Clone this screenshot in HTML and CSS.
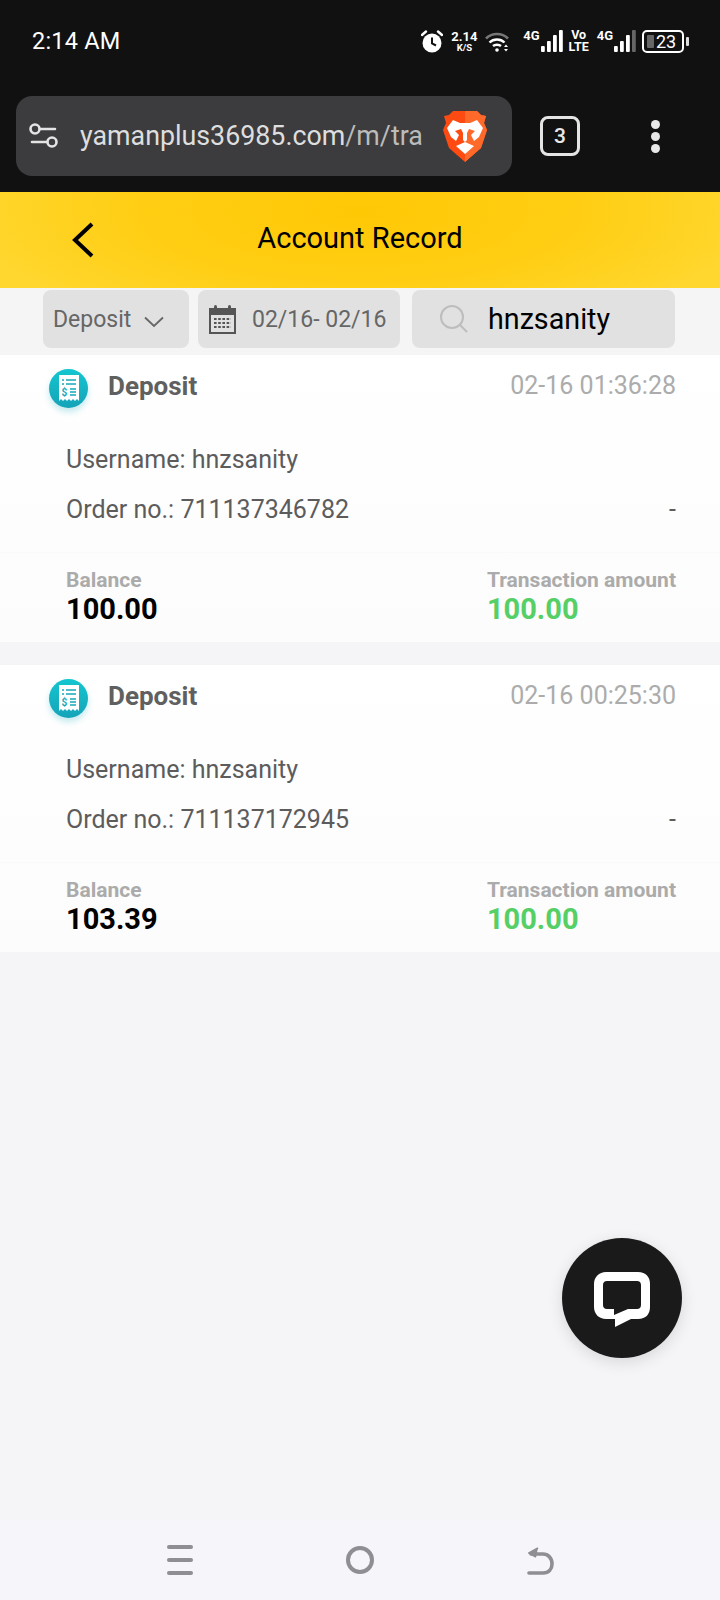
FILE: index.html
```html
<!DOCTYPE html>
<html lang="en">
<head>
    <meta charset="UTF-8">
    <meta name="viewport" content="width=device-width, initial-scale=1.0">
    <title>Account Record</title>
    <link rel="stylesheet" href="styles.css">
</head>
<body>
    <div class="browser">
        <div class="status-bar">
            <span class="clock">2:14 AM</span>
            <div class="status-icons">
                <svg class="alarm" width="22" height="23" viewBox="0 0 22 23">
                    <circle cx="11" cy="13" r="9.5" fill="#fff"/>
                    <path d="M11 7.5V13.5L15 15.5" fill="none" stroke="#111" stroke-width="2"/>
                    <path d="M1 5L5 1.5M21 5L17 1.5" stroke="#fff" stroke-width="2.4" stroke-linecap="round"/>
                </svg>
                <div class="speed"><span>2.14</span><small>K/S</small></div>
                <svg class="wifi" width="24" height="21" viewBox="0 0 24 21">
                    <path d="M1 7.5C7 1.5 17 1.5 23 7.5" fill="none" stroke="#777" stroke-width="2.6"/>
                    <path d="M4.5 11.5C8.5 7.5 15.5 7.5 19.5 11.5" fill="none" stroke="#fff" stroke-width="2.4"/>
                    <path d="M8 15C10 13.3 14 13.3 16 15" fill="none" stroke="#fff" stroke-width="2.4"/>
                    <circle cx="12" cy="19" r="1.8" fill="#fff"/>
                    <path d="M21 13.5L23 16H19ZM21 20.5L23 18H19Z" fill="#fff"/>
                </svg>
                <span class="net-label">4G</span>
                <svg class="bars" width="22" height="22" viewBox="0 0 22 22">
                    <rect x="0" y="16" width="3.8" height="6" rx="1" fill="#fff"/>
                    <rect x="6" y="11" width="3.8" height="11" rx="1" fill="#fff"/>
                    <rect x="12" y="5" width="3.8" height="17" rx="1" fill="#fff"/>
                    <rect x="18" y="0" width="3.8" height="22" rx="1" fill="#fff"/>
                </svg>
                <div class="volte"><span>Vo</span><span>LTE</span></div>
                <span class="net-label">4G</span>
                <svg class="bars" width="22" height="22" viewBox="0 0 22 22">
                    <rect x="0" y="16" width="3.8" height="6" rx="1" fill="#fff"/>
                    <rect x="6" y="11" width="3.8" height="11" rx="1" fill="#fff"/>
                    <rect x="12" y="5" width="3.8" height="17" rx="1" fill="#fff"/>
                    <rect x="18" y="0" width="3.8" height="22" rx="1" fill="#666"/>
                </svg>
                <div class="battery">
                    <div class="battery-fill"></div>
                    <span>23</span>
                </div>
                <div class="battery-nib"></div>
            </div>
        </div>
        <div class="toolbar">
            <div class="url-bar">
                <svg class="tune" width="30" height="30" viewBox="0 0 30 30">
                    <circle cx="6" cy="8" r="4.5" fill="none" stroke="#e4e4e4" stroke-width="2.6"/>
                    <path d="M11 8H26M3 21H18" stroke="#e4e4e4" stroke-width="2.6" stroke-linecap="round"/>
                    <circle cx="23" cy="21" r="4.5" fill="none" stroke="#e4e4e4" stroke-width="2.6"/>
                </svg>
                <div class="url"><span class="url-host">yamanplus36985.com</span>/m/tra</div>
                <svg class="brave" width="44" height="52" viewBox="0 0 44 52">
                    <path d="M10 1H34L38 5L43 6L41 13L44 20L38 38L22 52L6 38L0 20L3 13L1 6L6 5Z" fill="#ff4a12"/>
                    <path d="M22 1H34L38 5L43 6L41 13L44 20L38 38L22 52Z" fill="#ff6a2a"/>
                    <path d="M4 18L10 10L17 13H27L34 10L40 18L36 27L31 31L28 25L32 21L26 19L24 23V30L22 32L20 30V23L18 19L12 21L16 25L13 31L8 27Z" fill="#fff"/>
                    <path d="M13 36L22 32L31 36L22 44Z" fill="#fff"/>
                </svg>
            </div>
            <div class="tab-count">3</div>
            <div class="kebab"><i></i><i></i><i></i></div>
        </div>
    </div>

    <header class="page-header">
        <svg class="back" width="24" height="36" viewBox="0 0 24 36">
            <path d="M21 2L4 18L21 34" fill="none" stroke="#000" stroke-width="4"/>
        </svg>
        <h1>Account Record</h1>
    </header>

    <div class="filters">
        <div class="chip chip-type">
            <span>Deposit</span>
            <svg width="20" height="12" viewBox="0 0 20 12"><path d="M1 1.5L10 10L19 1.5" fill="none" stroke="#666" stroke-width="1.8"/></svg>
        </div>
        <div class="chip chip-date">
            <svg width="27" height="29" viewBox="0 0 27 29">
                <rect x="1" y="4" width="25" height="24" fill="none" stroke="#555" stroke-width="2"/>
                <rect x="1" y="4" width="25" height="6" fill="#555"/>
                <rect x="5" y="0" width="3" height="7" rx="1.5" fill="#555"/>
                <rect x="19" y="0" width="3" height="7" rx="1.5" fill="#555"/>
                <path d="M5 14H22M5 18H22M5 22H22" stroke="#555" stroke-width="2.2" stroke-dasharray="2.6 1.6"/>
            </svg>
            <span>02/16- 02/16</span>
        </div>
        <div class="chip chip-search">
            <svg width="30" height="30" viewBox="0 0 30 30">
                <circle cx="13" cy="13" r="11" fill="none" stroke="#bdbdbd" stroke-width="2"/>
                <path d="M21 21L28 28" stroke="#bdbdbd" stroke-width="2"/>
            </svg>
            <span>hnzsanity</span>
        </div>
    </div>

    <main class="records">
        <section class="record">
            <div class="record-head">
                <div class="record-icon">
                    <svg width="20" height="26" viewBox="0 0 20 26">
                        <path d="M0 0H20V26L18 24L16 26L14 24L12 26L10 24L8 26L6 24L4 26L2 24L0 26Z" fill="#fff"/>
                        <path d="M3 5H5M7 5H17M3 9H5M7 9H17M11 14H17M11 17H17M11 20H17" stroke="#16a9ba" stroke-width="1.6"/>
                        <text x="2.5" y="20.5" class="dollar">$</text>
                    </svg>
                </div>
                <span class="record-title">Deposit</span>
                <span class="record-time">02-16 01:36:28</span>
            </div>
            <div class="record-info">
                <div class="info-row">Username: hnzsanity</div>
                <div class="info-row info-split"><span>Order no.: 711137346782</span><span>-</span></div>
            </div>
            <div class="record-foot">
                <div>
                    <div class="foot-label">Balance</div>
                    <div class="foot-value">100.00</div>
                </div>
                <div>
                    <div class="foot-label">Transaction amount</div>
                    <div class="foot-value amount">100.00</div>
                </div>
            </div>
        </section>

        <section class="record">
            <div class="record-head">
                <div class="record-icon">
                    <svg width="20" height="26" viewBox="0 0 20 26">
                        <path d="M0 0H20V26L18 24L16 26L14 24L12 26L10 24L8 26L6 24L4 26L2 24L0 26Z" fill="#fff"/>
                        <path d="M3 5H5M7 5H17M3 9H5M7 9H17M11 14H17M11 17H17M11 20H17" stroke="#16a9ba" stroke-width="1.6"/>
                        <text x="2.5" y="20.5" class="dollar">$</text>
                    </svg>
                </div>
                <span class="record-title">Deposit</span>
                <span class="record-time">02-16 00:25:30</span>
            </div>
            <div class="record-info">
                <div class="info-row">Username: hnzsanity</div>
                <div class="info-row info-split"><span>Order no.: 711137172945</span><span>-</span></div>
            </div>
            <div class="record-foot">
                <div>
                    <div class="foot-label">Balance</div>
                    <div class="foot-value">103.39</div>
                </div>
                <div>
                    <div class="foot-label">Transaction amount</div>
                    <div class="foot-value amount">100.00</div>
                </div>
            </div>
        </section>
    </main>

    <button class="chat-button" type="button" aria-label="Chat">
        <svg width="56" height="55" viewBox="0 0 56 55">
            <path fill-rule="evenodd" fill="#fff" d="M12 0H44C52 0 56 5 56 12V35C56 42 52 47 44 47H37L21 55V47H12C5 47 0 42 0 35V12C0 5 5 0 12 0ZM13 9C10.5 9 9 10.5 9 13V33C9 35.5 10.5 37 13 37H20V43L34 37H43C45.5 37 47 35.5 47 33V13C47 10.5 45.5 9 43 9Z"/>
        </svg>
    </button>

    <nav class="nav-bar">
        <div class="nav-menu"><i></i><i></i><i></i></div>
        <div class="nav-home"></div>
        <svg class="nav-back" width="27" height="29" viewBox="0 0 27 29">
            <path d="M2 27H16C22 27 25 23 25 18C25 12 21 8 16 8H4" fill="none" stroke="#8e8e93" stroke-width="3.6" stroke-linecap="round"/>
            <path d="M11 2L2 7L9 11" fill="#8e8e93" stroke="#8e8e93" stroke-width="2" stroke-linejoin="round"/>
        </svg>
    </nav>
</body>
</html>
```

FILE: styles.css
```css
* {
    box-sizing: border-box;
}
html, body {
    margin: 0;
    padding: 0;
}
body {
    position: relative;
    display: flex;
    flex-direction: column;
    width: 720px;
    height: 1600px;
    overflow: hidden;
    font-family: Roboto, "Liberation Sans", sans-serif;
    background-color: #f5f5f7;
    color: #333;
}

/* Phone status bar and browser toolbar */
.browser {
    background-color: #111112;
    height: 192px;
    flex-shrink: 0;
}
.status-bar {
    display: flex;
    align-items: center;
    height: 82px;
    padding: 0 32px;
    color: #fff;
}
.clock {
    font-size: 23.5px;
    letter-spacing: 0.2px;
}
.status-icons {
    display: flex;
    align-items: center;
    margin-left: auto;
    margin-right: -1px;
}
.alarm {
    margin-right: 6px;
}
.speed {
    display: flex;
    flex-direction: column;
    align-items: center;
    width: 30px;
    font-size: 13px;
    font-weight: 700;
    line-height: 13px;
    margin-right: 6px;
}
.speed small {
    font-size: 9.5px;
    line-height: 10px;
}
.wifi {
    margin-right: 14px;
}
.net-label {
    align-self: flex-start;
    font-size: 13px;
    font-weight: 700;
    line-height: 14px;
}
.bars {
    margin-left: 1px;
}
.volte {
    display: flex;
    flex-direction: column;
    align-items: center;
    width: 20px;
    margin: 0 8px 0 6px;
    font-size: 12.5px;
    font-weight: 700;
    line-height: 12px;
}
.battery {
    position: relative;
    display: flex;
    align-items: center;
    justify-content: center;
    width: 42px;
    height: 23px;
    margin-left: 6px;
    border: 2px solid #fff;
    border-radius: 5px;
    font-size: 18px;
    padding-left: 6px;
}
.battery-fill {
    position: absolute;
    left: 3px;
    top: 3px;
    bottom: 3px;
    width: 7px;
    border-radius: 1px;
    background-color: #666;
}
.battery span {
    position: relative;
}
.battery-nib {
    width: 3px;
    height: 9px;
    margin-left: 2px;
    border-radius: 1px;
    background-color: #ddd;
}

.toolbar {
    display: flex;
    align-items: center;
    height: 80px;
    margin-top: 14px;
    padding-left: 16px;
}
.url-bar {
    display: flex;
    align-items: center;
    width: 496px;
    height: 80px;
    padding-left: 13px;
    border-radius: 16px;
    background-color: #3c3c3e;
}
.tune {
    flex-shrink: 0;
}
.url {
    width: 342px;
    margin-left: 21px;
    white-space: nowrap;
    font-size: 26.8px;
    color: #bbb;
}
.url-host {
    color: #dedede;
}
.brave {
    margin-left: 21px;
    flex-shrink: 0;
}
.tab-count {
    display: flex;
    align-items: center;
    justify-content: center;
    width: 40px;
    height: 40px;
    margin-left: 28px;
    border: 3px solid #e4e4e4;
    border-radius: 8px;
    font-size: 21px;
    font-weight: 500;
    color: #e8e8e8;
}
.kebab {
    display: flex;
    flex-direction: column;
    gap: 3px;
    margin-left: 71px;
}
.kebab i {
    display: block;
    width: 9px;
    height: 9px;
    border-radius: 50%;
    background-color: #e8e8e8;
}

/* Yellow page header */
.page-header {
    display: flex;
    align-items: center;
    justify-content: center;
    position: relative;
    height: 96px;
    flex-shrink: 0;
    padding-bottom: 4px;
    background: radial-gradient(ellipse 400px 130px at 50% 20%, #ffc805 0%, #ffce14 55%, #ffd72f 100%);
}
.page-header h1 {
    margin: 0;
    font-size: 29px;
    font-weight: 400;
    color: #000;
}
.back {
    position: absolute;
    left: 71px;
    top: 30px;
}

/* Filters */
.filters {
    display: flex;
    height: 67px;
    flex-shrink: 0;
    padding: 2px 0 0 43px;
    background-color: #f5f5f5;
}
.chip {
    display: flex;
    align-items: center;
    height: 58px;
    border-radius: 8px;
    background-color: #e1e1e1;
    color: #666;
}
.chip-type {
    width: 146px;
    padding-left: 10px;
    font-size: 23px;
}
.chip-type svg {
    margin-left: 13px;
    margin-top: 5px;
}
.chip-date {
    width: 202px;
    margin-left: 9px;
    padding-left: 11px;
    font-size: 23px;
}
.chip-date span {
    margin-left: 16px;
}
.chip-search {
    width: 263px;
    margin-left: 12px;
    padding-left: 27px;
    font-size: 28.7px;
    color: #000;
}
.chip-search span {
    margin-left: 19px;
}

/* Record cards */
.records {
    flex: 1;
}
.record {
    height: 287px;
    margin-bottom: 23px;
    background: linear-gradient(#fff, #fcfcfc);
}
.record-head {
    display: flex;
    align-items: center;
    height: 61px;
    padding: 0 44px 0 49px;
}
.record-icon {
    display: flex;
    align-items: center;
    justify-content: center;
    width: 39px;
    height: 39px;
    margin-top: 5px;
    border-radius: 50%;
    background: linear-gradient(#14c6cf, #14a3b8);
    box-shadow: 0 4px 6px rgba(20, 170, 190, 0.25);
}
.dollar {
    font-size: 10px;
    font-weight: 700;
    fill: #16a9ba;
}
.record-title {
    margin-left: 20px;
    font-size: 26px;
    font-weight: 700;
    color: #606060;
}
.record-time {
    margin-left: auto;
    font-size: 25px;
    color: #acacac;
}
.record-info {
    height: 137px;
    padding: 19px 44px 0 66px;
    border-bottom: 1px solid #fafafa;
    font-size: 25px;
    color: #5c5c5c;
}
.info-row {
    height: 50px;
    line-height: 50px;
}
.info-split {
    display: flex;
    justify-content: space-between;
}
.record-foot {
    display: flex;
    justify-content: space-between;
    padding: 15px 44px 0 66px;
}
.foot-label {
    font-size: 21px;
    font-weight: 700;
    line-height: 24px;
    color: #ababab;
}
.foot-value {
    margin-top: 1px;
    font-size: 29px;
    font-weight: 700;
    line-height: 32px;
    color: #000;
}
.amount {
    color: #55cf66;
}

/* Floating chat button */
.chat-button {
    position: absolute;
    left: 562px;
    top: 1238px;
    display: flex;
    align-items: center;
    justify-content: center;
    width: 120px;
    height: 120px;
    padding: 0;
    border: none;
    border-radius: 50%;
    background-color: #1a1a1a;
    box-shadow: 0 4px 16px rgba(0, 0, 0, 0.12);
}
.chat-button svg {
    margin-top: 3px;
}

/* Android nav bar */
.nav-bar {
    position: relative;
    height: 80px;
    flex-shrink: 0;
    display: flex;
    align-items: center;
    justify-content: space-between;
    padding: 0 166px 0 167px;
    background-color: #f5f5fa;
}
.nav-menu {
    display: flex;
    flex-direction: column;
    gap: 9px;
}
.nav-menu i {
    display: block;
    width: 26px;
    height: 4px;
    border-radius: 2px;
    background-color: #8e8e93;
}
.nav-home {
    width: 28px;
    height: 28px;
    border: 4px solid #8e8e93;
    border-radius: 50%;
}
```
